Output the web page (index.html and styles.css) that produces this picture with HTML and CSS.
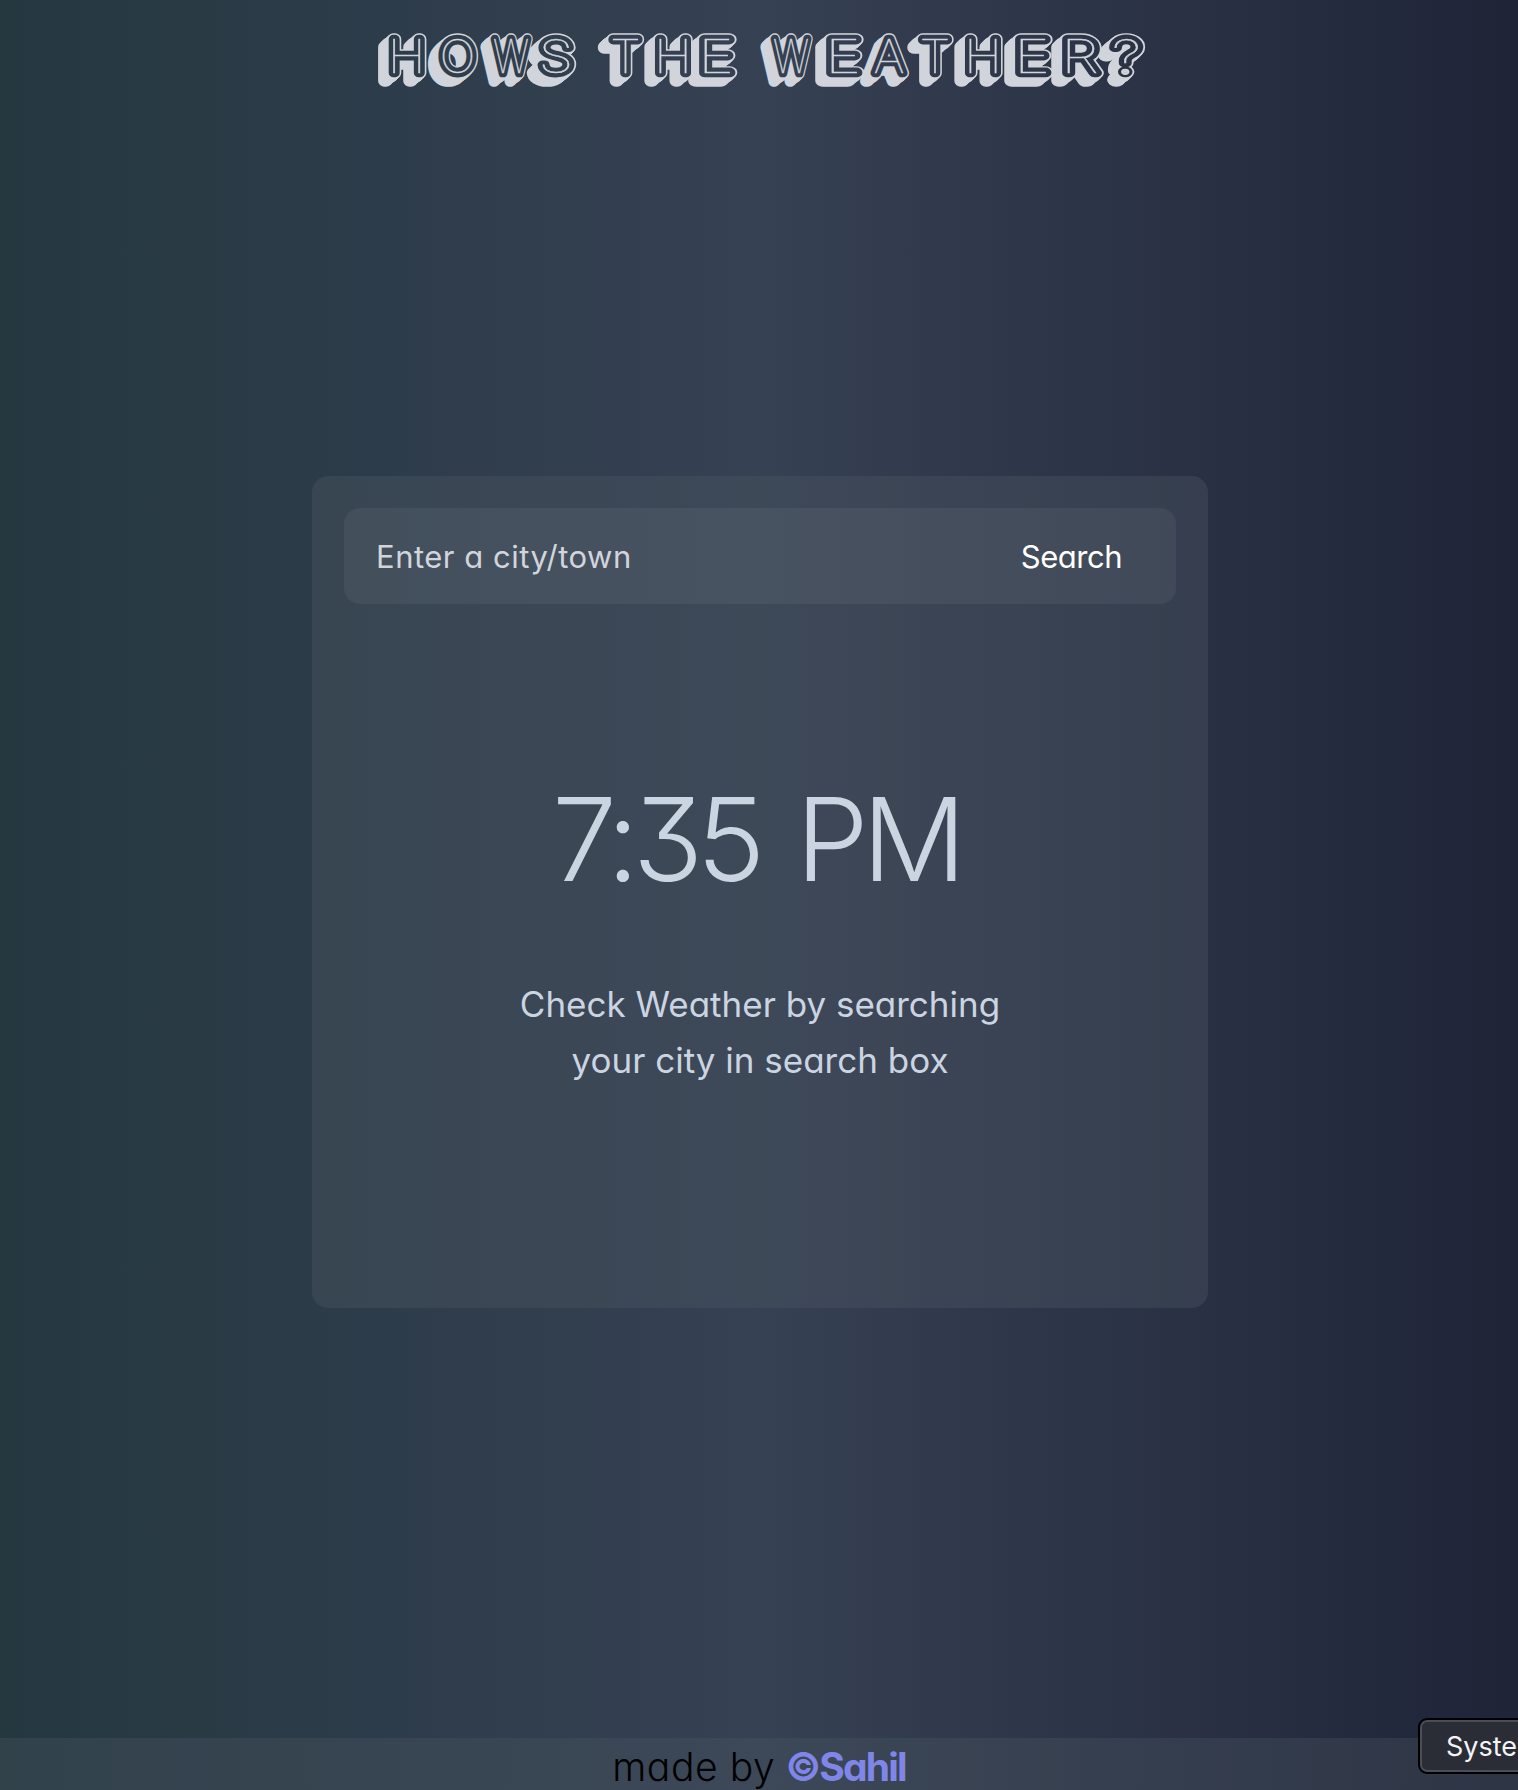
FILE: index.html
```html
<!DOCTYPE html>
<html lang="en">
<head>
<meta charset="utf-8">
<title>Hows the weather?</title>
<link rel="stylesheet" href="styles.css">
</head>
<body>
<div class="page">
  <header class="header">
    <svg class="title" viewBox="0 0 1518 120" width="1518" height="120">
      <defs>
        <linearGradient id="face" gradientUnits="userSpaceOnUse" x1="0" y1="0" x2="1518" y2="0">
          <stop offset="0" stop-color="#253840"/>
          <stop offset=".25" stop-color="#2d3c4a"/>
          <stop offset=".5" stop-color="#364153"/>
          <stop offset="1" stop-color="#1f2437"/>
        </linearGradient>
        <text id="word" y="73" text-anchor="middle"><tspan x="406.8" textLength="38" lengthAdjust="spacingAndGlyphs">H</tspan><tspan x="457.5" textLength="36" lengthAdjust="spacingAndGlyphs">O</tspan><tspan x="511" textLength="36" lengthAdjust="spacingAndGlyphs">W</tspan><tspan x="562.5" textLength="35" lengthAdjust="spacingAndGlyphs">S</tspan> <tspan x="625.5" textLength="31" lengthAdjust="spacingAndGlyphs">T</tspan><tspan x="673" textLength="38" lengthAdjust="spacingAndGlyphs">H</tspan><tspan x="722.5" textLength="36" lengthAdjust="spacingAndGlyphs">E</tspan> <tspan x="791" textLength="36" lengthAdjust="spacingAndGlyphs">W</tspan><tspan x="843" textLength="36" lengthAdjust="spacingAndGlyphs">E</tspan><tspan x="889" textLength="31" lengthAdjust="spacingAndGlyphs">A</tspan><tspan x="935" textLength="31" lengthAdjust="spacingAndGlyphs">T</tspan><tspan x="983" textLength="38" lengthAdjust="spacingAndGlyphs">H</tspan><tspan x="1032" textLength="36" lengthAdjust="spacingAndGlyphs">E</tspan><tspan x="1080" textLength="38" lengthAdjust="spacingAndGlyphs">R</tspan><tspan x="1126.5" textLength="29" lengthAdjust="spacingAndGlyphs">?</tspan></text>
      </defs>
      <g class="title-edge">
        <use href="#word" x="-9" y="8"/><use href="#word" x="-8" y="7"/><use href="#word" x="-7" y="6"/>
        <use href="#word" x="-6" y="5"/><use href="#word" x="-5" y="4"/><use href="#word" x="-4" y="3.5"/>
        <use href="#word" x="-3" y="2.5"/><use href="#word" x="-2" y="2"/><use href="#word" x="-1" y="1"/>
        <use href="#word"/>
      </g>
      <use class="title-face" href="#word"/>
      <use class="title-line" href="#word"/>
    </svg>
  </header>
  <main class="main">
    <section class="card">
      <form class="search">
        <span class="placeholder">Enter a city/town</span>
        <span class="submit">Search</span>
      </form>
      <div class="time">7:35 PM</div>
      <p class="hint">Check Weather by searching<br>your city in search box</p>
    </section>
  </main>
  <footer class="footer"><span class="made">made by</span><b class="author">©Sahil</b></footer>
  <div class="tooltip">Syste</div>
</div>
</body>
</html>
```

FILE: styles.css
```css
* { box-sizing: border-box; }
body { margin: 0; }
.page {
  position: relative;
  display: flex;
  flex-direction: column;
  width: 1518px;
  height: 1790px;
  overflow: hidden;
  background: linear-gradient(90deg, #253840, #2d3c4a 25%, #364153 50%, #1f2437);
  font-family: Inter, "Open Sans", sans-serif;
  font-feature-settings: "cv11", "cv09";
  color: #cbd5e1;
  white-space: nowrap;
}
.header { height: 120px; }
.title { display: block; font-family: Inter, sans-serif; font-size: 46px; font-weight: 100; stroke-linejoin: round; }
.title-edge { fill: #d1d5db; stroke: #d1d5db; stroke-width: 11.5px; }
.title-face { fill: url(#face); stroke: url(#face); stroke-width: 8.7px; }
.title-line { fill: #d1d5db; stroke: #d1d5db; stroke-width: .5px; }
.main { flex: 1; display: flex; justify-content: center; padding: 356px 0 0 2px; }
.card {
  width: 896px;
  height: 832px;
  padding: 32px;
  border-radius: 16px;
  background: rgba(75, 85, 97, .4);
}
.search {
  display: flex;
  justify-content: space-between;
  align-items: center;
  height: 96px;
  padding: 0 54px 0 32px;
  border-radius: 16px;
  background: rgba(255, 255, 255, .055);
  font-size: 31px;
}
.placeholder { color: #d1d5db; letter-spacing: .5px; }
.submit { color: #fff; letter-spacing: -.5px; }
.time {
  margin-top: 163px;
  padding-right: 8px;
  font-size: 116px;
  line-height: 144px;
  font-weight: 300;
  letter-spacing: -6.6px;
  word-spacing: 11px;
  text-align: center;
}
.hint { margin: 65px 0 0; font-size: 35px; line-height: 56px; text-align: center; }
.footer {
  display: flex;
  justify-content: center;
  gap: 10px;
  height: 52px;
  padding-top: 4px;
  background: rgba(75, 85, 97, .35);
  font-size: 39px;
  line-height: 50px;
}
.made { color: #000; font-weight: 300; letter-spacing: .6px; }
.author { color: #7f86e8; font-weight: 700; letter-spacing: -1.8px; }
.tooltip {
  position: absolute;
  left: 1418px;
  top: 1718px;
  width: 140px;
  height: 56px;
  padding-left: 26px;
  border: 2px solid #000;
  border-radius: 9px;
  box-shadow: inset 0 0 0 2px #4b4e58;
  background: #2a2d36;
  color: #f3f4f6;
  font-size: 27px;
  line-height: 54px;
  font-feature-settings: normal;
}
```
